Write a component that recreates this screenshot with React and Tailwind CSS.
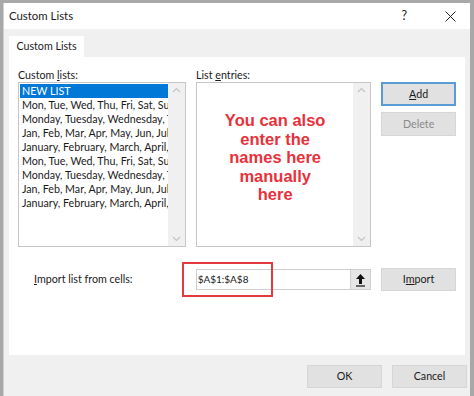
import React from "react";

const LISTS = [
  "NEW LIST",
  "Mon, Tue, Wed, Thu, Fri, Sat, Sun",
  "Monday, Tuesday, Wednesday, Thursday",
  "Jan, Feb, Mar, Apr, May, Jun, Jul, Aug",
  "January, February, March, April, May",
  "Mon, Tue, Wed, Thu, Fri, Sat, Sun",
  "Monday, Tuesday, Wednesday, Thursday",
  "Jan, Feb, Mar, Apr, May, Jun, Jul, Aug",
  "January, February, March, April, May",
];

function ScrollBar() {
  return (
    <div className="w-[17px] shrink-0 bg-[#f0f0f0] flex flex-col justify-between items-center py-1">
      <svg width="9" height="6" viewBox="0 0 9 6">
        <path d="M1 5 L4.5 1.5 L8 5" fill="none" stroke="#c4c4c4" strokeWidth="1.2" />
      </svg>
      <svg width="9" height="6" viewBox="0 0 9 6">
        <path d="M1 1 L4.5 4.5 L8 1" fill="none" stroke="#c4c4c4" strokeWidth="1.2" />
      </svg>
    </div>
  );
}

export default function App() {
  return (
    <div
      className="w-[474px] h-[396px] bg-[#a8a8a8] pl-[3px] pr-[4px] pt-[3px] overflow-hidden text-[#1a1a1a]"
      style={{ fontFamily: 'Lato, "Noto Sans", sans-serif' }}
    >
      <div className="h-full bg-[#f0f0f0] flex flex-col border-l border-[#d0d0d0]">
        {/* title bar */}
        <div className="h-[26px] bg-white flex items-center pl-[5px] pr-[14px] shrink-0">
          <span className="text-[11.4px] leading-none">Custom Lists</span>
          <span className="ml-auto mr-[38px] text-[12.5px] leading-none">?</span>
          <svg width="11" height="11" viewBox="0 0 11 11">
            <path d="M0.5 0.5 L10.5 10.5 M10.5 0.5 L0.5 10.5" stroke="#222" strokeWidth="1" />
          </svg>
        </div>

        {/* tab strip */}
        <div className="px-[5px] pt-[7px] shrink-0 flex">
          <div className="w-[75px] h-[21px] bg-white flex items-center justify-center text-[10.7px]">
            Custom Lists
          </div>
        </div>

        {/* panel */}
        <div className="mx-[5px] h-[298px] bg-white shrink-0 flex flex-col px-[9px] pt-[10px]">
          <div className="flex gap-[10px]">
            <div className="w-[168px] flex flex-col">
              <span className="text-[10.7px] leading-[15px] h-[15px]">
                Custom <u>l</u>ists:
              </span>
              <div className="h-[165px] border border-[#c6c6c6] flex">
                <div className="flex-1 min-w-0 pt-[1px] pl-[1px]">
                  {LISTS.map((item, i) => (
                    <div
                      key={i}
                      className={
                        "h-[14px] text-[10.7px] leading-[14px] whitespace-nowrap overflow-hidden pl-[2px] " +
                        (i === 0 ? "bg-[#0078d7] text-white" : "")
                      }
                    >
                      {item}
                    </div>
                  ))}
                </div>
                <ScrollBar />
              </div>
            </div>

            <div className="w-[176px] flex flex-col">
              <span className="text-[10.7px] leading-[15px] h-[15px]">
                List <u>e</u>ntries:
              </span>
              <div className="h-[165px] border border-[#c6c6c6] flex">
                <div
                  className="flex-1 pt-[28px] text-center text-[#e8313b] font-bold text-[16.5px] leading-[18.5px]"
                  style={{ fontFamily: '"Liberation Sans", Arial, sans-serif' }}
                >
                  You can also
                  <br />
                  enter the
                  <br />
                  names here
                  <br />
                  manually
                  <br />
                  here
                </div>
                <ScrollBar />
              </div>
            </div>

            <div className="w-[75px] flex flex-col gap-[6px] pt-[15px]">
              <div className="h-[24px] border-2 border-[#5b9bd5] bg-[#e1e1e1] flex items-center justify-center text-[10.7px]">
                <span>
                  <u>A</u>dd
                </span>
              </div>
              <div className="h-[24px] bg-[#e1e1e1] border border-[#d6d6d6] flex items-center justify-center text-[10.7px] text-[#8a8a8a]">
                Delete
              </div>
            </div>
          </div>

          {/* import row */}
          <div className="flex items-center mt-[21px]">
            <span className="w-[168px] pl-[16px] text-[10.7px]">
              <u>I</u>mport list from cells:
            </span>
            <div className="relative ml-[10px] w-[176px] h-[21px] border border-[#cfcfcf] flex">
              <div className="flex-1 flex items-center pl-[1px] text-[10px]">$A$1:$A$8</div>
              <div className="w-[20px] bg-[#e6e6e6] border-l border-[#cfcfcf] flex items-center justify-center">
                <svg width="11" height="14" viewBox="0 0 11 14">
                  <path d="M5.5 1 L1 6 L4 6 L4 11 L7 11 L7 6 L10 6 Z" fill="#111" />
                  <path d="M1 13 L10 13" stroke="#111" strokeWidth="1.2" />
                </svg>
              </div>
              <div className="absolute left-[-15px] top-[-8px] w-[91px] h-[35px] border-2 border-[#e33a3f]" />
            </div>
            <div className="ml-[10px] w-[75px] h-[23px] bg-[#e1e1e1] border border-[#d6d6d6] flex items-center justify-center text-[10.7px]">
              <span>
                I<u>m</u>port
              </span>
            </div>
          </div>
        </div>

        {/* footer */}
        <div className="flex justify-end gap-[10px] pr-[3px] pt-[10px]">
          <div className="w-[75px] h-[23px] bg-[#e1e1e1] border border-[#d6d6d6] flex items-center justify-center text-[10.7px]">
            OK
          </div>
          <div className="w-[75px] h-[23px] bg-[#e1e1e1] border border-[#d6d6d6] flex items-center justify-center text-[10.7px]">
            Cancel
          </div>
        </div>
      </div>
    </div>
  );
}
